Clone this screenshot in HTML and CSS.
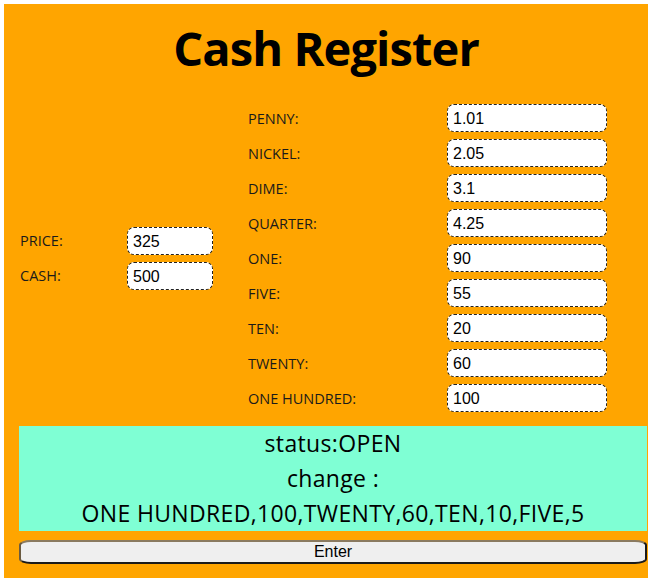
FILE: index.html
```html
<!DOCTYPE html>
<html>
<head>
<meta charset="utf-8">
<link rel="stylesheet" href="styles.css">
</head>
<body>
<div class="app">
  <h1 class="title">Cash Register</h1>
  <div class="form">
    <div class="group group-left">
      <label class="lbl">PRICE:</label><input class="field field-sm" value="325">
      <label class="lbl">CASH:</label><input class="field field-sm" value="500">
    </div>
    <div class="group group-right">
      <label class="lbl">PENNY:</label><input class="field" value="1.01">
      <label class="lbl">NICKEL:</label><input class="field" value="2.05">
      <label class="lbl">DIME:</label><input class="field" value="3.1">
      <label class="lbl">QUARTER:</label><input class="field" value="4.25">
      <label class="lbl">ONE:</label><input class="field" value="90">
      <label class="lbl">FIVE:</label><input class="field" value="55">
      <label class="lbl">TEN:</label><input class="field" value="20">
      <label class="lbl">TWENTY:</label><input class="field" value="60">
      <label class="lbl">ONE HUNDRED:</label><input class="field" value="100">
    </div>
  </div>
  <div class="status">
    <div class="status-line">status:OPEN</div>
    <div class="status-line">change :</div>
    <div class="status-line">ONE HUNDRED,100,TWENTY,60,TEN,10,FIVE,5</div>
  </div>
  <button class="enter">Enter</button>
</div>
</body>
</html>
```
FILE: styles.css
```css
html, body {
  background: #ffffff;
}
body {
  margin: 4px;
}
.app {
  background: #ffa500;
  height: 574px;
  box-sizing: border-box;
  padding: 0 15px;
  overflow: visible;
}
.title {
  margin: 0;
  padding-top: 16px;
  height: 80px;
  box-sizing: border-box;
  text-align: center;
  font-family: "Open Sans", sans-serif;
  font-weight: 700;
  font-size: 47px;
  line-height: 56px;
  letter-spacing: -0.9px;
  color: #000;
}
.form {
  display: flex;
  align-items: center;
  gap: 35px;
  margin-top: 20px;
}
.group {
  display: grid;
  row-gap: 7px;
  align-items: center;
}
.group-left {
  grid-template-columns: 107px 86px;
  padding-left: 1px;
}
.group-right {
  grid-template-columns: 199px 160px;
}
.lbl {
  font-family: "Open Sans", sans-serif;
  font-size: 14.5px;
  color: #1a1a1a;
}
.field {
  box-sizing: border-box;
  height: 28px;
  width: 160px;
  border: 1px dashed #222;
  border-radius: 7px;
  background: #fff;
  padding: 2px 5px 0;
  font-family: "Liberation Sans", Arial, sans-serif;
  font-size: 16px;
  color: #000;
  outline: none;
}
.field-sm {
  width: 86px;
}
.status {
  margin-top: 14px;
  width: 628px;
  background: #7fffd4;
  text-align: center;
  padding: 0;
}
.status-line {
  font-family: "Open Sans", sans-serif;
  font-size: 23px;
  letter-spacing: 0.35px;
  line-height: 35px;
  height: 35px;
  color: #000;
}
.enter {
  display: block;
  margin-top: 9px;
  width: 628px;
  height: 24px;
  background: #efefef;
  border: 2px solid #1a1a1a;
  border-top-color: #8a7a60;
  border-left-color: #6a5a40;
  border-radius: 12px / 5px;
  font-family: "Liberation Sans", Arial, sans-serif;
  font-size: 16px;
  color: #000;
  padding: 0;
}
```
